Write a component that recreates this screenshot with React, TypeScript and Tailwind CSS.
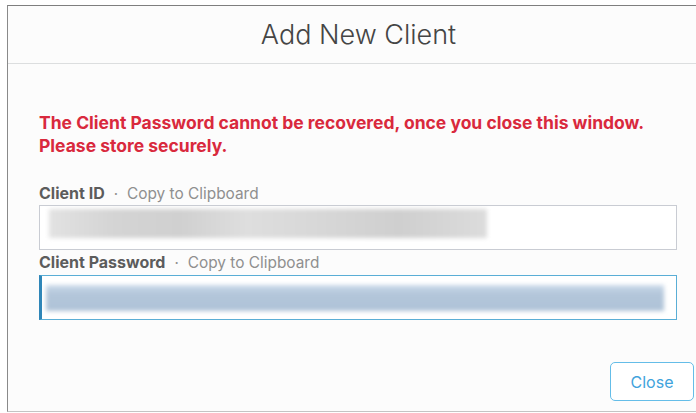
import { useState } from "react";

// Redacted credential values are shown as soft blurred bars
function Field({
  label,
  focused,
  children,
}: {
  label: string;
  focused?: boolean;
  children: React.ReactNode;
}) {
  return (
    <div>
      <div className="flex items-baseline leading-[20px]">
        <span className="text-[16px] font-bold text-[#5c5c5c]">{label}</span>
        <span className="ml-[9px] mr-[9px] text-[15px] text-[#8f8f8f]">·</span>
        <button className="text-[15.4px] text-[#8f8f8f]">Copy to Clipboard</button>
      </div>
      <div
        className={
          focused
            ? "mt-[2px] h-[45px] w-[638px] overflow-hidden bg-white border border-[#5aaed6] border-l-[3px] border-l-[#2f86b8]"
            : "mt-[1px] h-[45px] w-[638px] overflow-hidden bg-white border border-[#c9ccd3]"
        }
      >
        {children}
      </div>
    </div>
  );
}

export default function App() {
  const [open, setOpen] = useState(true);

  return (
    <div className="h-[413px] w-[696px] overflow-hidden bg-white pt-[5px] pl-[7px] font-['Inter','Liberation_Sans',sans-serif]">
      <div className="flex h-[407px] w-[702px] flex-col border-t-[1.5px] border-l-[1.5px] border-b border-t-[#7e7e7e] border-l-[#8a8a8a] border-b-[#c4c4c4] bg-[#fcfcfc]">
        {/* Header */}
        <div className="flex h-[58px] shrink-0 items-center justify-center border-b border-[#dcdedf]">
          <h1 className="pt-[2px] text-[27px] font-light text-[#454545]">Add New Client</h1>
        </div>

        {/* Body */}
        <div className="flex-1 pl-[31px] pt-[47px]">
          <p className="text-[17.5px] font-bold leading-[23px] text-[#d9293d]">
            The Client Password cannot be recovered, once you close this window.
            <br />
            Please store securely.
          </p>

          <div className="mt-[26px]">
            <Field label="Client ID">
              <div className="ml-[9px] mt-[3px] h-[29px] w-[438px] blur-[2px] bg-[linear-gradient(90deg,#e2e2e2_0%,#d4d4d4_15%,#d0d0d0_30%,#dedede_45%,#d8d8d8_60%,#cfcfcf_80%,#dcdcdc_100%)]" />
            </Field>
          </div>

          <div className="mt-[2px]">
            <Field label="Client Password" focused>
              <div className="ml-[4px] mt-[9px] h-[26px] w-[618px] blur-[2px] bg-[linear-gradient(180deg,#cbdaea_0%,#b3c6da_35%,#afc3d8_100%)]" />
            </Field>
          </div>
        </div>

        {/* Footer */}
        <div className="flex h-[49px] shrink-0 items-start justify-end pr-[15px]">
          <button
            onClick={() => setOpen(!open)}
            className="flex h-[39px] w-[84px] items-center justify-center rounded-[5px] border-[1.5px] border-[#64bde8] bg-white text-[16px] text-[#3fa3dc]"
          >
            Close
          </button>
        </div>
      </div>
    </div>
  );
}
